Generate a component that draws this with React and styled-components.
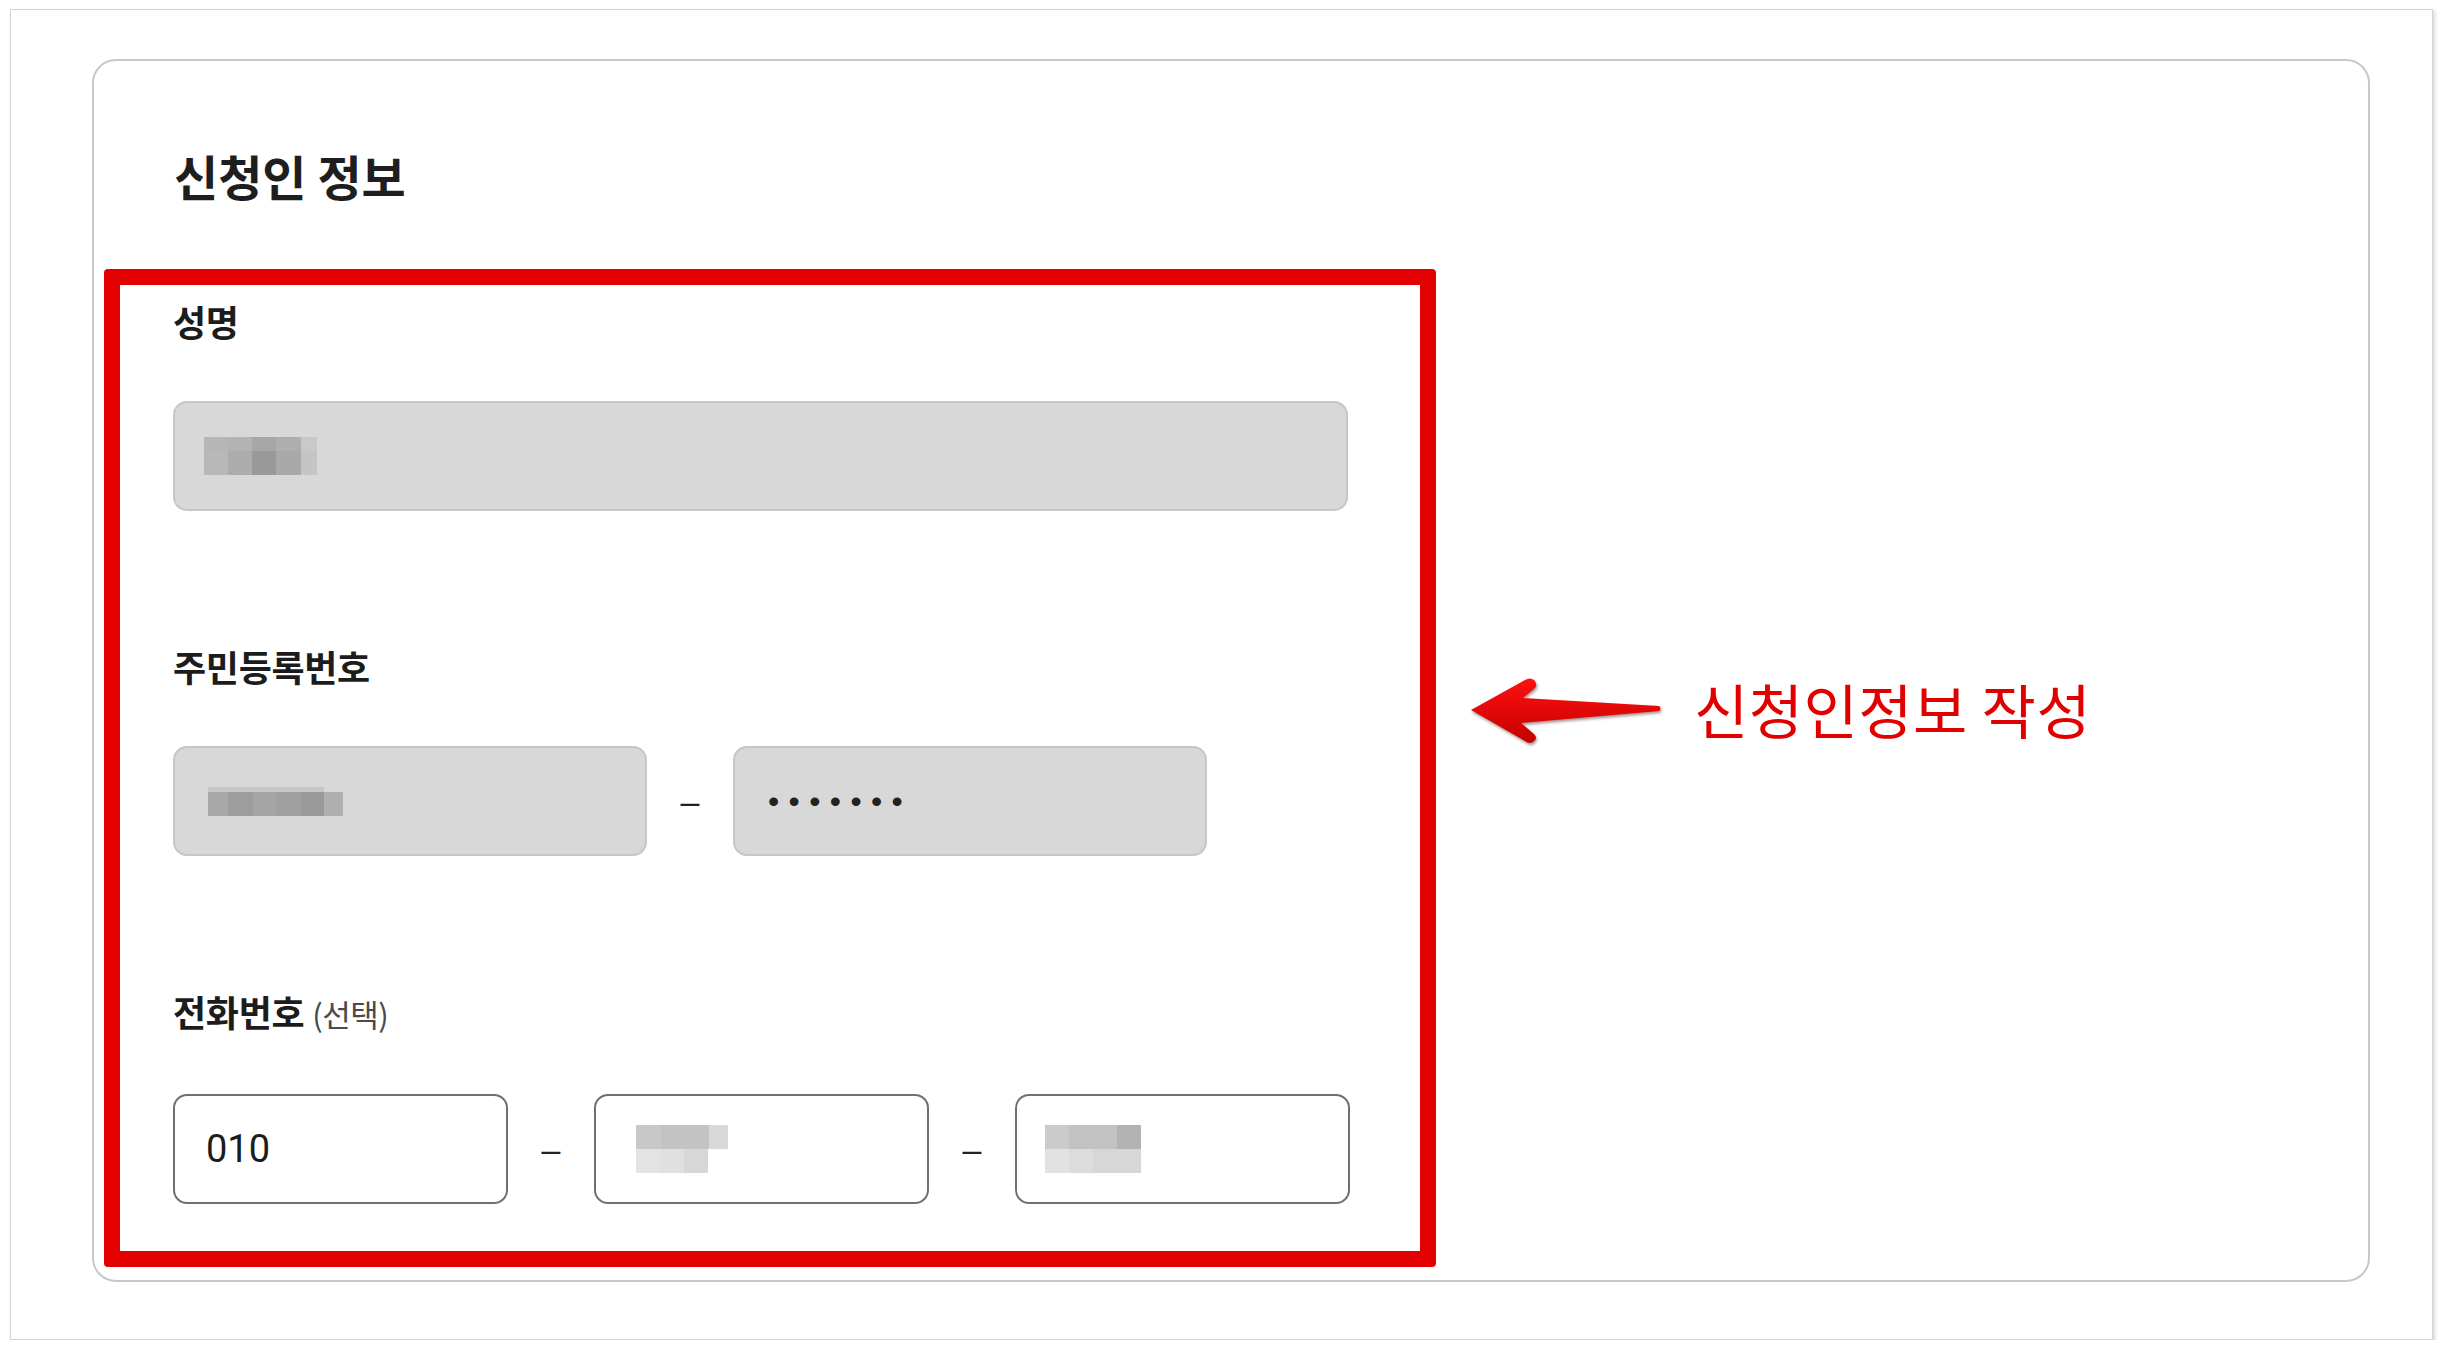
import styled, { createGlobalStyle } from "styled-components";

const GlobalStyle = createGlobalStyle`
  html, body {
    margin: 0;
    padding: 0;
    background: #ffffff;
  }
  body {
    font-family: "Noto Sans CJK KR", "Noto Sans", sans-serif;
    color: #1c1c1c;
  }
`;

const NAME_CELLS = [
  [0, 0, 24, 14, "#b6b6b6"], [24, 0, 24, 14, "#b3b3b3"], [48, 0, 24, 14, "#a7a7a7"], [72, 0, 25, 14, "#aeaeae"], [97, 0, 16, 14, "#c9c9c9"],
  [0, 14, 24, 24, "#b8b8b8"], [24, 14, 24, 24, "#acacac"], [48, 14, 24, 24, "#999999"], [72, 14, 25, 24, "#a9a9a9"], [97, 14, 16, 24, "#c5c5c5"],
];

const RRN_CELLS = [
  [0, 0, 116, 5, "#c6c6c6"],
  [0, 5, 20, 24, "#a9a9a9"], [20, 5, 25, 24, "#9d9d9d"], [45, 5, 23, 24, "#a5a5a5"], [68, 5, 25, 24, "#a0a0a0"], [93, 5, 23, 24, "#9a9a9a"], [116, 5, 19, 24, "#b0b0b0"],
];

const PHONE_MID_CELLS = [
  [0, 0, 25, 24, "#c8c8c8"], [25, 0, 48, 24, "#c3c3c3"], [73, 0, 19, 24, "#d9d9d9"],
  [0, 24, 25, 24, "#e3e3e3"], [25, 24, 23, 24, "#e0e0e0"], [48, 24, 24, 24, "#d7d7d7"],
];

const PHONE_LAST_CELLS = [
  [0, 0, 24, 24, "#cbcbcb"], [24, 0, 48, 24, "#c2c2c2"], [72, 0, 24, 24, "#b3b3b3"],
  [0, 24, 24, 24, "#e2e2e2"], [24, 24, 24, 24, "#dcdcdc"], [48, 24, 48, 24, "#d7d7d7"],
];

function Mosaic({ cells, shift = 0 }) {
  const w = Math.max(...cells.map(c => c[0] + c[2]));
  const h = Math.max(...cells.map(c => c[1] + c[3]));
  return (
    <MosaicSvg $shift={shift} width={w} height={h} viewBox={`0 0 ${w} ${h}`}>
      {cells.map(([x, y, cw, ch, fill], i) => (
        <rect key={i} x={x} y={y} width={cw} height={ch} fill={fill} />
      ))}
    </MosaicSvg>
  );
}

function Arrow() {
  return (
    <ArrowSvg width="196" height="70" viewBox="0 0 196 70">
      <defs>
        <linearGradient id="arrowFill" x1="0" y1="0" x2="0" y2="1">
          <stop offset="0" stopColor="#ff1010" />
          <stop offset="1" stopColor="#c40000" />
        </linearGradient>
      </defs>
      <path
        d="M2,32 L56,2 Q61,-1 65,2 Q69,6 66,10 L54,20 L190,28 Q193,30.5 190,33 L52,45 L65,56 Q69,60 65,63 Q61,67 56,63 Z"
        fill="url(#arrowFill)"
      />
    </ArrowSvg>
  );
}

function App() {
  return (
    <>
      <GlobalStyle />
      <Frame>
        <Card>
          <Title>신청인 정보</Title>
          <Body>
            <Highlight>
              <Field>
                <Label>성명</Label>
                <InputRow>
                  <InputBox $filled $width={1175}>
                    <Mosaic cells={NAME_CELLS} shift={1} />
                  </InputBox>
                </InputRow>
              </Field>

              <Field>
                <Label>주민등록번호</Label>
                <InputRow>
                  <InputBox $filled $width={474}>
                    <Mosaic cells={RRN_CELLS} shift={5} />
                  </InputBox>
                  <Dash>–</Dash>
                  <InputBox $filled $width={474}>
                    <Dots>•••••••</Dots>
                  </InputBox>
                </InputRow>
              </Field>

              <Field>
                <Label>
                  전화번호 <Optional>(선택)</Optional>
                </Label>
                <InputRow>
                  <InputBox $width={335}>
                    <Value>010</Value>
                  </InputBox>
                  <Dash>–</Dash>
                  <InputBox $width={335}>
                    <Mosaic cells={PHONE_MID_CELLS} shift={12} />
                  </InputBox>
                  <Dash>–</Dash>
                  <InputBox $width={335}>
                    <Mosaic cells={PHONE_LAST_CELLS} shift={0} />
                  </InputBox>
                </InputRow>
              </Field>
            </Highlight>

            <Note>
              <Arrow />
              <NoteText>신청인정보 작성</NoteText>
            </Note>
          </Body>
        </Card>
      </Frame>
    </>
  );
}

export default App;

const Frame = styled.div`
  box-sizing: border-box;
  margin: 9px 0 0 10px;
  width: 2423px;
  height: 1331px;
  border: 1px solid #d4d4d4;
  box-shadow: 2px 2px 4px rgba(0, 0, 0, 0.16);
  padding: 49px 0 0 81px;
  background: #fff;
`;

const Card = styled.div`
  box-sizing: border-box;
  width: 2278px;
  height: 1223px;
  border: 2px solid #c8c8c8;
  border-radius: 24px;
  padding: 83px 0 0 10px;
`;

const Title = styled.h2`
  margin: 0 0 63px 70px;
  font-size: 48px;
  line-height: 62px;
  font-weight: 700;
  color: #1e1e1e;
`;

const Body = styled.div`
  display: flex;
  align-items: flex-start;
`;

const Highlight = styled.div`
  box-sizing: border-box;
  width: 1332px;
  height: 998px;
  border: 16px solid #e30000;
  border-radius: 4px;
  padding: 11px 0 0 53px;
  display: flex;
  flex-direction: column;
  gap: 130px;
`;

const Field = styled.div`
  display: flex;
  flex-direction: column;
  gap: 55px;
`;

const Label = styled.div`
  font-size: 36px;
  line-height: 50px;
  font-weight: 700;
  color: #1c1c1c;
  letter-spacing: -0.3px;
`;

const Optional = styled.span`
  font-size: 31px;
  font-weight: 400;
  color: #4a4a4a;
  letter-spacing: -0.5px;
`;

const InputRow = styled.div`
  display: flex;
  align-items: center;
`;

const InputBox = styled.div`
  box-sizing: border-box;
  width: ${p => p.$width}px;
  height: 110px;
  border-radius: 14px;
  border: 2px solid ${p => (p.$filled ? "#c6c6c6" : "#707070")};
  background: ${p => (p.$filled ? "#d8d8d8" : "#ffffff")};
  display: flex;
  align-items: center;
  padding-left: 28px;
`;

const MosaicSvg = styled.svg`
  display: block;
  margin-left: ${p => p.$shift}px;
`;

const Dash = styled.span`
  width: 86px;
  text-align: center;
  font-family: "Liberation Sans", sans-serif;
  font-size: 34px;
  color: #222;
`;

const Dots = styled.span`
  margin-left: 5px;
  font-family: "Liberation Sans", sans-serif;
  font-size: 32px;
  letter-spacing: 9.4px;
  color: #222;
`;

const Value = styled.span`
  margin-left: 3px;
  font-family: Roboto, "Noto Sans CJK KR", sans-serif;
  font-size: 38px;
  color: #1c1c1c;
`;

const Note = styled.div`
  display: flex;
  align-items: center;
  gap: 29px;
  margin: 409px 0 0 33px;
`;

const ArrowSvg = styled.svg`
  display: block;
  filter: drop-shadow(1px 2px 1.5px rgba(60, 0, 0, 0.45));
`;

const NoteText = styled.span`
  margin-top: -8px;
  font-size: 59px;
  line-height: 70px;
  font-weight: 400;
  color: #e00000;
  letter-spacing: 0.5px;
`;
